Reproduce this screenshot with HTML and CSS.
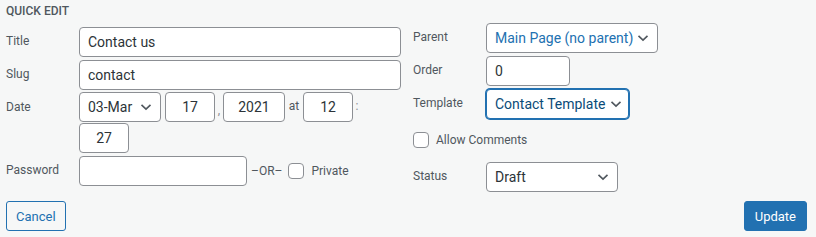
FILE: index.html
```html
<!DOCTYPE html>
<html lang="en">

<head>
    <meta charset="UTF-8">
    <title>Quick Edit</title>
    <link rel="stylesheet" href="styles.css">
</head>

<body>
    <div class="quick-edit">
        <h3 class="legend">Quick Edit</h3>

        <div class="cols">
            <fieldset class="col-left">
                <div class="row">
                    <span class="title">Title</span>
                    <input type="text" class="field wide" value="Contact us">
                </div>
                <div class="row">
                    <span class="title">Slug</span>
                    <input type="text" class="field wide" value="contact">
                </div>
                <div class="row row-top">
                    <span class="title date-title">Date</span>
                    <div class="timestamp">
                        <div class="select sel-month"><span>03-Mar</span><svg class="chev" viewBox="0 0 12 8"><path d="M1.5 1.8l4.5 4.3 4.5-4.3" /></svg></div>
                        <input type="text" class="field num" value="17">
                        <span class="sep comma">,</span>
                        <input type="text" class="field year" value="2021">
                        <span class="sep at">at</span>
                        <input type="text" class="field num" value="12">
                        <span class="sep colon">:</span>
                        <input type="text" class="field num" value="27">
                    </div>
                </div>
                <div class="row">
                    <span class="title">Password</span>
                    <input type="text" class="field pass" value="">
                    <span class="or">&ndash;OR&ndash;</span>
                    <span class="check"></span>
                    <span class="check-label">Private</span>
                </div>
            </fieldset>

            <fieldset class="col-right">
                <div class="row">
                    <span class="title">Parent</span>
                    <div class="select sel-parent"><span>Main Page (no parent)</span><svg class="chev" viewBox="0 0 12 8"><path d="M1.5 1.8l4.5 4.3 4.5-4.3" /></svg></div>
                </div>
                <div class="row">
                    <span class="title">Order</span>
                    <input type="text" class="field order" value="0">
                </div>
                <div class="row">
                    <span class="title">Template</span>
                    <div class="select sel-template focus"><span>Contact Template</span><svg class="chev" viewBox="0 0 12 8"><path d="M1.5 1.8l4.5 4.3 4.5-4.3" /></svg></div>
                </div>
                <div class="row comments">
                    <span class="check"></span>
                    <span class="check-label">Allow Comments</span>
                </div>
                <div class="row">
                    <span class="title">Status</span>
                    <div class="select sel-status"><span>Draft</span><svg class="chev" viewBox="0 0 12 8"><path d="M1.5 1.8l4.5 4.3 4.5-4.3" /></svg></div>
                </div>
            </fieldset>
        </div>

        <div class="actions">
            <button type="button" class="btn cancel">Cancel</button>
            <button type="button" class="btn primary">Update</button>
        </div>
    </div>
</body>

</html>
```

FILE: styles.css
```css
body {
    margin: 0;
    background-color: #f6f7f7;
    font-family: Roboto, "Liberation Sans", Arial, sans-serif;
    color: #3c434a;
    font-size: 12px;
}

.quick-edit {
    width: 816px;
    height: 237px;
    padding: 0 9px 0 6px;
    box-sizing: border-box;
}

.legend {
    margin: 0;
    padding-top: 4px;
    height: 15px;
    font-size: 12px;
    font-weight: 500;
    color: #50575e;
    text-transform: uppercase;
    line-height: 15px;
}

.cols {
    display: grid;
    grid-template-columns: 407px 1fr;
}

fieldset {
    border: none;
    margin: 0;
    padding: 0;
    min-width: 0;
}

.col-left {
    padding-top: 8px;
}

.col-right {
    padding-top: 4px;
}

.row {
    display: flex;
    align-items: center;
    margin-bottom: 3px;
}

.row-top {
    align-items: flex-start;
    margin-top: -1px;
}

.title {
    width: 73px;
    flex-shrink: 0;
    color: #50575e;
    margin-top: -2px;
}

.date-title {
    line-height: 30px;
    margin-top: 0;
}

.field {
    height: 30px;
    box-sizing: border-box;
    border: 1px solid #8c8f94;
    border-radius: 4px;
    background: #fff;
    padding: 0 8px;
    font: 14px Roboto, "Liberation Sans", Arial, sans-serif;
    color: #2c3338;
    margin: 0;
}

.wide {
    width: 322px;
}

.pass {
    width: 168px;
}

.order {
    width: 84px;
}

.num {
    width: 50px;
    text-align: center;
}

.year {
    width: 62px;
    text-align: center;
}

.timestamp {
    display: flex;
    flex-wrap: wrap;
    align-items: center;
    row-gap: 1px;
    width: 300px;
}

.sep {
    text-align: center;
    color: #8c8f94;
}

.sep.comma {
    width: 8px;
    align-self: flex-end;
    line-height: 24px;
}

.sep.at {
    width: 18px;
    color: #50575e;
    margin-top: -3px;
}

.sep.colon {
    width: 8px;
    margin-top: -3px;
}

.select {
    height: 30px;
    box-sizing: border-box;
    border: 1px solid #8c8f94;
    border-radius: 4px;
    background: #fff;
    display: flex;
    align-items: center;
    justify-content: space-between;
    padding: 0 8px;
    font-size: 14px;
    color: #2c3338;
    white-space: nowrap;
}

.chev {
    width: 12px;
    height: 8px;
    flex-shrink: 0;
    fill: none;
    stroke: #50575e;
    stroke-width: 1.6;
}

.sel-month {
    width: 82px;
    margin-right: 4px;
}

.sel-parent {
    width: 172px;
    color: #2271b1;
}

.sel-template {
    width: 143px;
    padding-right: 6px;
}

.sel-template.focus {
    border-color: #2271b1;
    box-shadow: 0 0 0 1px #2271b1;
    color: #0a4b78;
}

.sel-status {
    width: 132px;
}

.or {
    margin: 0 6px 0 4px;
    color: #50575e;
}

.check {
    width: 16px;
    height: 16px;
    box-sizing: border-box;
    border: 1px solid #8c8f94;
    border-radius: 4px;
    background: #fff;
    flex-shrink: 0;
}

.check-label {
    margin-left: 7px;
    color: #50575e;
}

.comments {
    margin-top: 13px;
    margin-bottom: 14px;
}

.actions {
    display: flex;
    justify-content: space-between;
    margin-top: 6px;
}

.btn {
    height: 30px;
    border-radius: 3px;
    padding: 0 10px;
    font: 13px Roboto, "Liberation Sans", Arial, sans-serif;
    cursor: pointer;
}

.cancel {
    border: 1px solid #2271b1;
    background: #f6f7f7;
    color: #2271b1;
    padding: 0 9px;
}

.primary {
    border: 1px solid #2271b1;
    background: #2271b1;
    color: #fff;
}
```
